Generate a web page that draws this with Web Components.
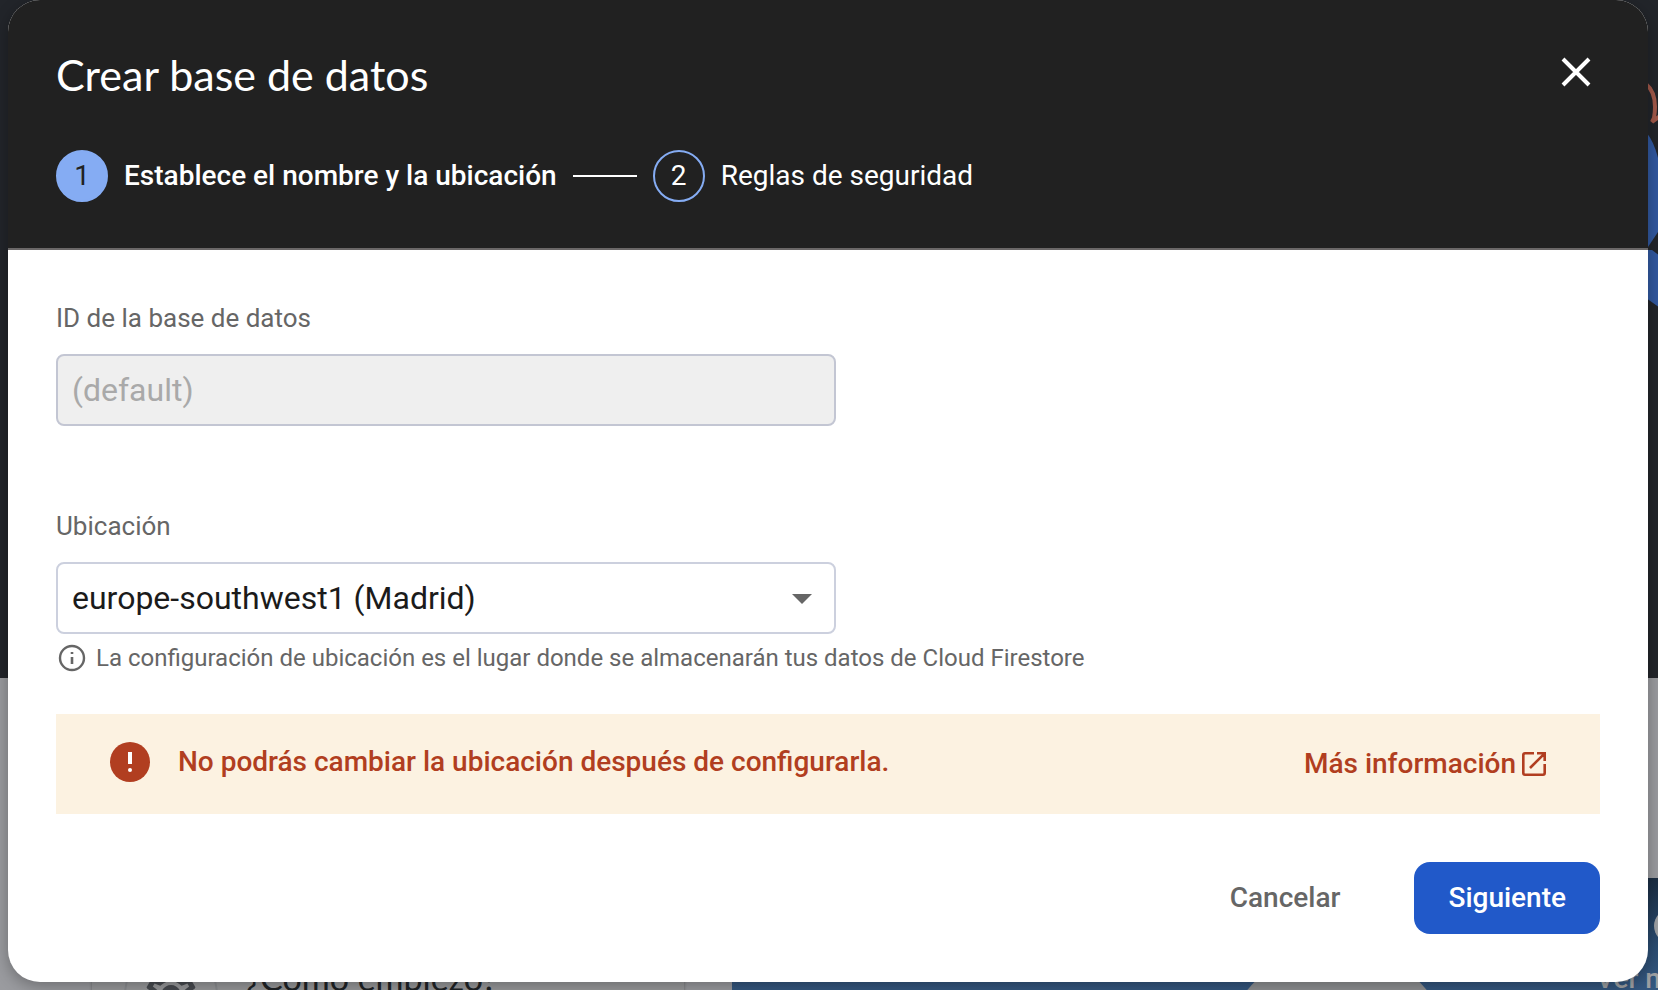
<!DOCTYPE html>
<html lang="es">
<head>
<meta charset="utf-8">
<title>Crear base de datos</title>
<style>
  html, body { margin: 0; height: 100%; }
  body { font-family: Roboto, "Liberation Sans", sans-serif; color: #1f1f1f; overflow: hidden; }
</style>
</head>
<body>
<app-shell>
  <console-page slot="page"></console-page>
  <create-dialog slot="dialog">
    <step-item slot="step" number="1" active>Establece el nombre y la ubicación</step-item>
    <step-item slot="step" number="2">Reglas de seguridad</step-item>
    <text-field label="ID de la base de datos" value="(default)"></text-field>
    <select-field label="Ubicación" options="europe-southwest1 (Madrid)">La configuración de ubicación es el lugar donde se almacenarán tus datos de Cloud Firestore</select-field>
    <alert-banner>No podrás cambiar la ubicación después de configurarla.</alert-banner>
    <action-button slot="actions" kind="text">Cancelar</action-button>
    <action-button slot="actions" kind="primary">Siguiente</action-button>
  </create-dialog>
</app-shell>

<script>
const define = (name, render) => customElements.define(name, class extends HTMLElement {
  connectedCallback() {
    if (this.shadowRoot) return;
    const t = document.createElement('template');
    t.innerHTML = render(this);
    this.attachShadow({ mode: 'open' }).append(t.content.cloneNode(true));
  }
});

define('app-shell', () => `
<style>
  :host { display: grid; grid-template: minmax(0, 1fr) / minmax(0, 1fr); height: 100vh; overflow: hidden; }
  ::slotted(*) { grid-area: 1 / 1; }
  ::slotted([slot=dialog]) { z-index: 1; align-self: start; margin: 0 10px 0 8px; }
</style>
<slot name="page"></slot><slot name="dialog"></slot>`);

define('console-page', () => `
<style>
  :host { display: flex; flex-direction: column; background: #9a9b9f; overflow: hidden; }
  .hero { flex: none; height: 678px; background: #22252a; display: flex; justify-content: flex-end; }
  .hero svg { width: 58px; height: 400px; }
  .content { display: grid; grid-template-columns: 592px minmax(0, 1fr); gap: 48px; padding: 200px 0 0 92px; }
  .card { display: flex; align-items: flex-start; gap: 28px; padding: 70px 32px 0; background: #98999b; box-shadow: 0 0 3px rgba(0,0,0,.3); height: 200px; }
  .tile { display: grid; place-items: center; width: 90px; height: 90px; border: 2px solid #8b8d90; border-radius: 50%; }
  .tile svg { width: 60px; height: 60px; fill: #484b50; }
  .card p { margin: 0; padding-top: 8px; font: 34px/44px Lato, sans-serif; color: #202427; }
  .card, .card * { box-sizing: content-box; }
  .card { box-sizing: border-box; }
  .video { display: grid; grid-template-columns: minmax(0, 1fr) 62px; background: linear-gradient(#1b2d42, #2b4d73 70px, #34577f 110px); height: 260px; overflow: hidden; }
  .disc { justify-self: end; width: 230px; height: 230px; margin: 69px 144px 0 0; border-radius: 50%; background: #8f9193; }
  .later { display: flex; flex-direction: column; gap: 20px; padding-top: 31px; color: #9ea0a3; font: 500 28px/32px Roboto, sans-serif; white-space: nowrap; }
  .later svg { width: 34px; height: 34px; margin-left: 58px; flex: none; }
</style>
<div class="hero">
  <svg viewBox="0 0 58 400" aria-hidden="true">
    <path d="M46 84Q58 94 54 118L52 122 60 116" fill="none" stroke="#a2594a" stroke-width="4"/>
    <path d="M46 132Q58 146 62 180V226L46 250Z" fill="#31589f"/>
    <path d="M46 250H52L60 256V308L46 298Z" fill="#31589f"/>
  </svg>
</div>
<div class="content">
  <div class="card">
    <div class="tile"><svg viewBox="0 0 24 24" aria-hidden="true"><path d="M19.43 12.98c.04-.32.07-.64.07-.98 0-.34-.03-.66-.07-.98l2.11-1.65c.19-.15.24-.42.12-.64l-2-3.46c-.09-.16-.26-.25-.44-.25-.06 0-.12.01-.17.03l-2.49 1c-.52-.4-1.08-.73-1.69-.98l-.38-2.65C14.46 2.18 14.25 2 14 2h-4c-.25 0-.46.18-.49.42l-.38 2.65c-.61.25-1.17.59-1.69.98l-2.49-1c-.06-.02-.12-.03-.18-.03-.17 0-.34.09-.43.25l-2 3.46c-.13.22-.07.49.12.64l2.11 1.65c-.04.32-.07.65-.07.98 0 .33.03.66.07.98l-2.11 1.65c-.19.15-.24.42-.12.64l2 3.46c.09.16.26.25.44.25.06 0 .12-.01.17-.03l2.49-1c.52.4 1.08.73 1.69.98l.38 2.65c.03.24.24.42.49.42h4c.25 0 .46-.18.49-.42l.38-2.65c.61-.25 1.17-.59 1.69-.98l2.49 1c.06.02.12.03.18.03.17 0 .34-.09.43-.25l2-3.46c.12-.22.07-.49-.12-.64l-2.11-1.65zm-1.98-1.71c.04.31.05.52.05.73 0 .21-.02.43-.05.73l-.14 1.13.89.7 1.08.84-.7 1.21-1.27-.51-1.04-.42-.9.68c-.43.32-.84.56-1.25.73l-1.06.43-.16 1.13-.2 1.35h-1.4l-.19-1.35-.16-1.13-1.06-.43c-.43-.18-.83-.41-1.23-.71l-.91-.7-1.06.43-1.27.51-.7-1.21 1.08-.84.89-.7-.14-1.13c-.03-.31-.05-.54-.05-.74s.02-.43.05-.73l.14-1.13-.89-.7-1.08-.84.7-1.21 1.27.51 1.04.42.9-.68c.43-.32.84-.56 1.25-.73l1.06-.43.16-1.13.2-1.35h1.39l.19 1.35.16 1.13 1.06.43c.43.18.83.41 1.23.71l.91.7 1.06-.43 1.27-.51.7 1.21-1.07.85-.89.7.14 1.13zM12 8c-2.21 0-4 1.79-4 4s1.79 4 4 4 4-1.79 4-4-1.79-4-4-4zm0 6c-1.1 0-2-.9-2-2s.9-2 2-2 2 .9 2 2-.9 2-2 2z"/></svg></div>
    <p>¿Cómo empiezo?</p>
  </div>
  <div class="video">
    <div class="disc"></div>
    <div class="later"><svg viewBox="0 0 34 34" aria-hidden="true"><circle cx="17" cy="17" r="17" fill="#9ea0a3"/><path d="M17 8v10l7 4" fill="none" stroke="#2b4d73" stroke-width="3"/></svg><span>Ver más</span></div>
  </div>
</div>`);

define('create-dialog', () => `
<style>
  :host { display: block; border-radius: 32px; overflow: hidden; background: #fff; box-shadow: 0 4px 16px rgba(0,0,0,.3); }
  header { background: #212121; color: #fff; border-bottom: 2px solid #6b6868; padding: 50px 48px 46px; }
  .top { display: flex; justify-content: space-between; align-items: flex-start; }
  h1 { margin: 0; font: 400 43px/50px Lato, "Open Sans", sans-serif; }
  button { display: grid; place-items: center; width: 48px; height: 44px; padding: 0; border: 0; background: none; color: inherit; }
  button svg { width: 30px; height: 30px; }
  ol { display: flex; align-items: center; gap: 16px; margin: 50px 0 0; padding: 0; }
  main { padding: 52px 48px 0; }
  footer { display: flex; justify-content: flex-end; gap: 40px; padding: 48px; }
</style>
<header>
  <div class="top">
    <h1>Crear base de datos</h1>
    <button type="button" aria-label="Cerrar"><svg viewBox="0 0 30 30" aria-hidden="true"><path d="M2 2 28 28M28 2 2 28" stroke="#fff" stroke-width="4"/></svg></button>
  </div>
  <ol role="list"><slot name="step"></slot></ol>
</header>
<main><slot></slot></main>
<footer><slot name="actions"></slot></footer>`);

define('step-item', el => `
<style>
  :host { display: flex; align-items: center; gap: 16px; font-size: 28px; line-height: 32px; color: #fff; }
  .num { box-sizing: border-box; display: grid; place-items: center; width: 52px; height: 52px; border: 2px solid #85acf3; border-radius: 50%; }
  :host([active]) .num { background: #85acf3; color: #212121; }
  :host([active]) .text { font-weight: 500; }
  :host([active])::after { content: ""; width: 64px; height: 2px; background: #fff; }
</style>
<span class="num">${el.getAttribute('number')}</span><span class="text"><slot></slot></span>`);

define('text-field', el => `
<style>
  :host { display: flex; flex-direction: column; gap: 20px; }
  label { font-size: 26px; line-height: 32px; color: #666; }
  input { box-sizing: border-box; width: 780px; max-width: 100%; height: 72px; padding: 0 14px; border: 2px solid #c3c6d3; border-radius: 8px; background: #efefef; font: 32px/40px Roboto, sans-serif; color: #a9a9a9; }
</style>
<label for="field">${el.getAttribute('label')}</label>
<input id="field" type="text" value="${el.getAttribute('value')}" disabled>`);

define('select-field', el => `
<style>
  :host { display: flex; flex-direction: column; gap: 20px; margin-top: 84px; }
  label { font-size: 26px; line-height: 32px; color: #666; }
  .box { display: grid; align-items: center; width: 780px; max-width: 100%; }
  select, .arrow { grid-area: 1 / 1; }
  select { appearance: none; box-sizing: border-box; width: 100%; height: 72px; padding: 0 14px; border: 2px solid #ccd0de; border-radius: 8px; background: #fff; font: 32px/40px Roboto, sans-serif; color: #1b1b1b; }
  .arrow { justify-self: end; width: 20px; height: 10px; margin: 2px 24px 0 0; fill: #666; pointer-events: none; }
  .hint { display: flex; align-items: center; gap: 10px; margin: -12px 0 0; padding-left: 2px; font-size: 24px; line-height: 32px; color: #666; }
  .hint svg { width: 28px; height: 28px; flex: none; }
</style>
<label for="field">${el.getAttribute('label')}</label>
<div class="box">
  <select id="field">${el.getAttribute('options').split('|').map(o => `<option>${o}</option>`).join('')}</select>
  <svg class="arrow" viewBox="0 0 20 10" aria-hidden="true"><path d="M0 0H20L10 10Z"/></svg>
</div>
<p class="hint"><svg viewBox="0 0 28 28" aria-hidden="true"><circle cx="14" cy="14" r="12" fill="none" stroke="#666" stroke-width="2.4"/><path d="M14 13V20M14 8V10" stroke="#666" stroke-width="2.6"/></svg><span><slot></slot></span></p>`);

define('alert-banner', () => `
<style>
  :host { display: flex; align-items: center; margin-top: 40px; padding: 0 54px; min-height: 100px; background: #fcf2e1; color: #b13e20; font-weight: 500; font-size: 28px; line-height: 36px; }
  .mark { width: 40px; height: 40px; flex: none; margin: 0 28px 4px 0; }
  .text { flex: 1; padding-bottom: 4px; }
  a { display: flex; align-items: center; gap: 6px; color: inherit; text-decoration: none; }
  a svg { width: 24px; height: 24px; }
</style>
<svg class="mark" viewBox="0 0 40 40" aria-hidden="true"><circle cx="20" cy="20" r="20" fill="#b13e20"/><path d="M18 10h4v12h-4z" fill="#fff"/><circle cx="20" cy="28" r="2" fill="#fff"/></svg>
<span class="text"><slot></slot></span>
<a href="#">Más información<svg viewBox="0 0 24 24" aria-hidden="true"><path d="M12 1.3H3Q1.3 1.3 1.3 3V21Q1.3 22.7 3 22.7H21Q22.7 22.7 22.7 21V12M15 1.3H22.7V9M22.7 1.3 8 16" fill="none" stroke="#b13e20" stroke-width="2.6"/></svg></a>`);

define('action-button', () => `
<style>
  :host { display: block; }
  button { height: 72px; padding: 0 34px; border: 0; border-radius: 16px; background: none; color: #666; font: 500 28px/36px Roboto, sans-serif; }
  :host([kind=primary]) button { background: #2159c9; color: #fff; }
</style>
<button type="button"><slot></slot></button>`);
</script>
</body>
</html>
